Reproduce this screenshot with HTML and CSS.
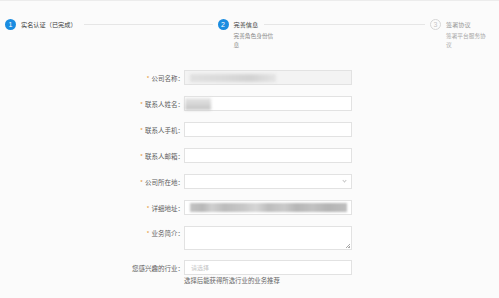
FILE: index.html
```html
<!DOCTYPE html>
<html lang="zh-CN">
<head>
    <meta charset="UTF-8">
    <title>完善信息</title>
    <link rel="stylesheet" href="styles.css">
</head>
<body>
    <div class="top-line"></div>

    <!-- steps -->
    <div class="steps">
        <div class="step done">
            <span class="step-num">1</span>
            <div class="step-body">
                <div class="step-title">实名认证（已完成）</div>
            </div>
        </div>
        <div class="step active">
            <span class="step-num">2</span>
            <div class="step-body">
                <div class="step-title">完善信息</div>
                <div class="step-desc">完善角色身份信息</div>
            </div>
        </div>
        <div class="step wait">
            <span class="step-num">3</span>
            <div class="step-body">
                <div class="step-title">签署协议</div>
                <div class="step-desc">签署平台服务协议</div>
            </div>
        </div>
    </div>

    <!-- form -->
    <div class="form">
        <div class="row">
            <label><i>*</i>公司名称：</label>
            <div class="field disabled"><span class="blur blur-name"></span></div>
        </div>
        <div class="row">
            <label><i>*</i>联系人姓名：</label>
            <div class="field"><span class="blur blur-person"></span></div>
        </div>
        <div class="row">
            <label><i>*</i>联系人手机：</label>
            <div class="field"></div>
        </div>
        <div class="row">
            <label><i>*</i>联系人邮箱：</label>
            <div class="field"></div>
        </div>
        <div class="row">
            <label><i>*</i>公司所在地：</label>
            <div class="field select"><span class="chevron"></span></div>
        </div>
        <div class="row">
            <label><i>*</i>详细地址：</label>
            <div class="field"><span class="blur blur-addr"></span></div>
        </div>
        <div class="row row-tall">
            <label><i>*</i>业务简介：</label>
            <div class="field textarea"><span class="grip"></span></div>
        </div>
        <div class="row row-industry">
            <label>您感兴趣的行业：</label>
            <div class="field"><span class="placeholder">请选择</span></div>
        </div>
        <div class="hint">选择后能获得所选行业的业务推荐</div>
    </div>
</body>
</html>
```

FILE: styles.css
```css
body {
    margin: 0;
    background-color: #fbfbfb;
    font-family: "Noto Sans CJK SC", "Noto Sans", sans-serif;
    color: #555;
}

.top-line {
    height: 1px;
    background-color: #ececec;
}

/* steps */
.steps {
    display: flex;
    padding: 17px 11px 0 5px;
    height: 34px;
}

.step {
    display: flex;
    flex: 1;
}

.step.wait {
    flex: none;
}

.step-num {
    width: 11px;
    height: 11px;
    border-radius: 50%;
    background-color: #1a8ce0;
    color: white;
    font-size: 7px;
    line-height: 11px;
    text-align: center;
    margin-top: 1px;
    margin-right: 5px;
    flex: none;
    font-family: "Liberation Sans", sans-serif;
}

.wait .step-num {
    background-color: transparent;
    border: 1px solid #d6d6d6;
    width: 9px;
    height: 9px;
    line-height: 9px;
    color: #c6c6c6;
}

.step-body {
    flex: 1;
}

.step-title {
    display: flex;
    align-items: center;
    font-size: 6.2px;
    line-height: 13px;
    color: #3a3a3a;
}

.step-title::after {
    content: "";
    flex: 1;
    height: 1px;
    background-color: #e6e6e6;
    margin: 0 5px 0 7px;
}

.active .step-title::after {
    margin-left: 6px;
}

.wait .step-title {
    color: #9a9a9a;
}

.wait .step-title::after {
    display: none;
}

.step-desc {
    width: 42px;
    font-size: 5.7px;
    line-height: 9px;
    color: #888;
}

.wait .step-desc {
    color: #a8a8a8;
}

/* form */
.form {
    padding-top: 18px;
}

.row {
    display: flex;
    align-items: center;
    margin-bottom: 11px;
}

.row label {
    width: 184px;
    text-align: right;
    font-size: 6.5px;
    color: #5e5e5e;
}

.row label i {
    font-style: normal;
    color: #e59a3c;
    margin-right: 2px;
}

.field {
    position: relative;
    box-sizing: border-box;
    width: 168px;
    height: 15px;
    border: 1px solid #e2e2e2;
    background-color: #fff;
}

.field.disabled {
    background-color: #f3f3f3;
}

.row-tall {
    align-items: flex-start;
    margin-bottom: 10px;
}

.row-tall label {
    line-height: 15px;
}

.field.textarea {
    height: 24px;
}

.grip {
    position: absolute;
    right: 1px;
    bottom: 1px;
    width: 4px;
    height: 4px;
    background: linear-gradient(135deg, transparent 45%, #aaa 45%, #aaa 55%, transparent 55%, transparent 75%, #aaa 75%);
}

.chevron {
    position: absolute;
    right: 5px;
    top: 4px;
    width: 2px;
    height: 2px;
    border-right: 1px solid #c8c8c8;
    border-bottom: 1px solid #c8c8c8;
    transform: rotate(45deg);
}

.blur {
    position: absolute;
    filter: blur(1.5px);
}

.blur-name {
    left: 5px;
    top: 3px;
    width: 86px;
    height: 8px;
    background: linear-gradient(90deg, #e0e0e0, #dadada 40%, #d2d2d2 70%, #e4e4e4);
}

.blur-person {
    left: 0;
    top: 1px;
    width: 26px;
    height: 12px;
    background: linear-gradient(180deg, #e6e6e6, #c4c4c4);
}

.blur-addr {
    left: 5px;
    top: 2px;
    width: 157px;
    height: 9px;
    filter: blur(1px);
    background: linear-gradient(90deg, #c4c4c4 0, #b8b8b8 8%, #d0d0d0 14%, #bcbcbc 22%, #c8c8c8 34%, #d6d6d6 42%, #bdbdbd 50%, #cacaca 60%, #b6b6b6 68%, #c2c2c2 78%, #b4b4b4 88%, #bfbfbf 100%);
}

.placeholder {
    position: absolute;
    left: 6px;
    top: 0;
    font-size: 6px;
    line-height: 13px;
    color: #c4c4c4;
}

.row-industry {
    margin-bottom: 1px;
}

.hint {
    margin-left: 184px;
    font-size: 6.4px;
    color: #666;
}
```
